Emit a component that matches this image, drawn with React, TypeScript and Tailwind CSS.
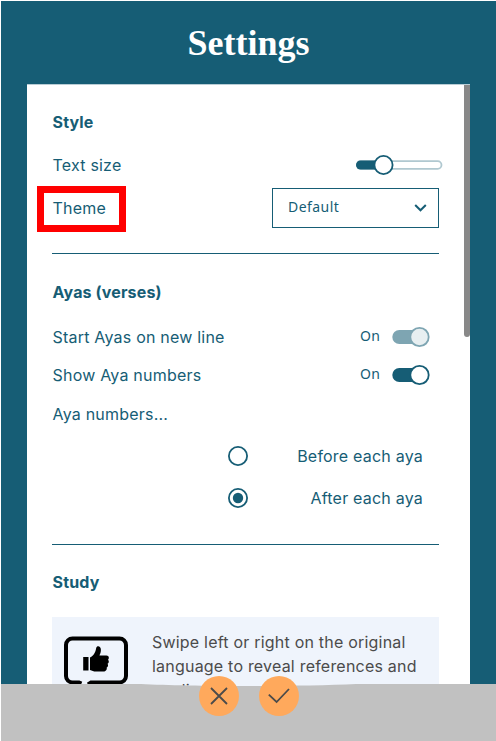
import type { ReactNode } from "react";

function Heading({ children }: { children: ReactNode }) {
  return <h2 className="flex h-10 items-center pl-[0.5px] text-base font-bold tracking-[0.15px]">{children}</h2>;
}

function Toggle({ disabled = false }: { disabled?: boolean }) {
  return (
    <div className="flex items-center pr-[9px]">
      <span className="mr-3 pb-[3px] font-['Noto_Sans',sans-serif] text-[14px]">On</span>
      <svg width="38" height="22" viewBox="0 0 38 22" opacity={disabled ? 0.55 : 1}>
        <rect x="0.3" y="4" width="34" height="14" rx="7" fill="#165d75" />
        <circle cx="27.5" cy="11" r="9.2" fill={disabled ? "#d6e3e7" : "#fff"} stroke="#165d75" strokeWidth="1.8" />
      </svg>
    </div>
  );
}

function Radio({ label, checked = false }: { label: string; checked?: boolean }) {
  return (
    <label className="flex h-[42px] items-center justify-between pl-[174.5px] pr-4">
      <svg width="22" height="22" viewBox="0 0 22 22">
        <circle cx="11" cy="11" r="9.1" fill="none" stroke="#165d75" strokeWidth="1.8" />
        {checked && <circle cx="11" cy="11" r="5.2" fill="#165d75" />}
      </svg>
      <span>{label}</span>
    </label>
  );
}

export default function App() {
  return (
    <div className="relative flex h-[741px] w-[496px] flex-col overflow-hidden border-l border-t border-white bg-[#165d75] font-['Inter',sans-serif] text-base tracking-[0.21px] text-[#165d75]">
      <header className="flex h-[83px] shrink-0 items-center justify-center font-['Liberation_Serif',serif] text-[36px] font-bold tracking-normal text-white">
        <h1>Settings</h1>
      </header>

      <main className="ml-[26px] flex h-[630px] w-[443px] shrink-0 overflow-hidden border-t border-[#b9cdd5] bg-white">
        <div className="ml-[25px] w-[387px] shrink-0">
          <section className="h-[169px] border-b border-[#165d75] pt-[17px]">
            <Heading>Style</Heading>
            <div className="mt-0.5 flex h-[42px] items-center justify-between">
              <span className="pl-[0.5px]">Text size</span>
              <svg className="-mr-1" width="88" height="22" viewBox="0 0 88 22">
                <rect x="2" y="7.2" width="84.5" height="7.6" rx="3.8" fill="#fff" stroke="#b0c8d0" strokeWidth="1.8" />
                <path d="M5.5 6.5H28v9H5.500a4.500 4.500 0 0 1 0-9Z" fill="#165d75" />
                <circle cx="28.500" cy="11" r="9.100" fill="#fff" stroke="#165d75" strokeWidth="1.8" />
              </svg>
            </div>
            <div className="mt-px flex h-[42px] items-center justify-between">
              <span className="-ml-[15px] mt-px flex h-[46px] w-[89px] items-center border-[7px] border-[#ff0000] pb-px pl-[8.5px]">Theme</span>
              <button className="flex h-10 w-[167px] items-center justify-between border border-[#165d75] pl-[15px] pr-[11px] font-['Noto_Sans',sans-serif] text-[14px] tracking-[0.45px]">
                <span className="pb-[3px]">Default</span>
                <svg width="13" height="8" viewBox="0 0 13 8" fill="none" stroke="#165d75" strokeWidth="2">
                  <path d="m1.200 1 5.300 5.300L11.800 1" />
                </svg>
              </button>
            </div>
          </section>

          <section className="h-[291px] border-b border-[#165d75] pt-[18px]">
            <Heading>Ayas (verses)</Heading>
            <div className="mt-[6px] flex h-[38px] items-center justify-between">
              <span className="pl-[0.5px]">Start Ayas on new line</span>
              <Toggle disabled />
            </div>
            <div className="flex h-[38px] items-center justify-between">
              <span className="pl-[0.5px]">Show Aya numbers</span>
              <Toggle />
            </div>
            <div className="mb-px flex h-10 items-center pl-[0.5px]">Aya numbers...</div>
            <Radio label="Before each aya" />
            <Radio label="After each aya" checked />
          </section>

          <section className="pt-[17px]">
            <Heading>Study</Heading>
            <div className="mt-[15px] flex h-[120px] bg-[#eff4fc] pl-[11px] pt-[13px] text-[#4b4b4b]">
              <svg className="mt-[5px] shrink-0" width="66" height="66" viewBox="0 0 66 66">
                <path d="M18.500 48.500 16 47.500H9.500A6.500 6.500 0 0 1 3 41V10A6.500 6.500 0 0 1 9.500 3.500h47A6.500 6.500 0 0 1 63 10v31a6.500 6.500 0 0 1-6.500 6.500H28l-3 2" fill="none" stroke="#000" strokeWidth="4" />
                <path d="M20.200 22h5.300v13.500h-5.300ZM27 22.500c4-2 5.500-5.500 6.200-9.500.6-3 5-2 4.700 2 0 2.500-.9 4-1.400 5.500H43.500c2.600 0 3 3 1.500 4.200 1.300 1.300 1 3.300-.4 4 1 1.500.3 3.300-.9 3.800.6 2.300-1 4-3.200 4H33c-2.500 0-4-.7-6-1.500Z" fill="#000" />
              </svg>
              <p className="ml-[23px] leading-6 whitespace-nowrap">
                Swipe left or right on the original
                <br />
                language to reveal references and
                <br />
                studies
              </p>
            </div>
          </section>
        </div>
        <div className="ml-[25px] h-[252px] w-[6px] shrink-0 rounded-b-full bg-[#888]" />
      </main>

      <footer className="relative -mt-[30px] flex h-[57px] shrink-0 justify-center">
        <svg className="absolute left-0 top-0" width="495" height="57" viewBox="0 0 495 57">
          <path d="M0 0H140C190 2.600 300 2.600 355 0H495V57H0Z" fill="#c1c1c1" />
        </svg>
        <div className="relative -mt-2 flex gap-5">
          <button className="flex size-10 items-center justify-center rounded-full bg-[#ffa95c]">
            <svg width="18" height="18" viewBox="0 0 18 18" stroke="#4b4b4b" strokeWidth="1.8">
              <path d="m1 1 16 16M17 1 1 17" />
            </svg>
          </button>
          <button className="flex size-10 items-center justify-center rounded-full bg-[#ffa95c]">
            <svg width="22" height="16" viewBox="0 0 22 16" fill="none" stroke="#4b4b4b" strokeWidth="1.8">
              <path d="m.8 6.600 7.800 7.400L21 1" />
            </svg>
          </button>
        </div>
      </footer>
    </div>
  );
}
